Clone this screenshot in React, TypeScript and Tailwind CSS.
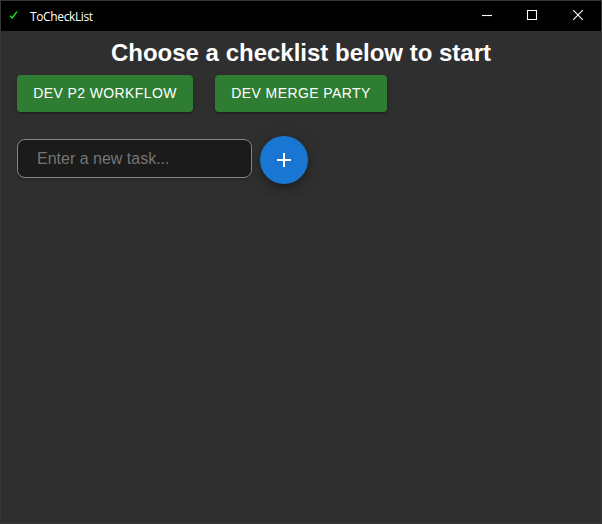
const controls = [
  { name: 'Minimize', d: 'M1 5.5h10' },
  { name: 'Maximize', d: 'M.5.5h9v9h-9z' },
  { name: 'Close', d: 'M.2.2l9.6 9.6M9.8.2L.2 9.8' },
];

const raised =
  'flex h-[37px] items-center justify-center rounded bg-[#2e7d32] pb-px text-sm tracking-[0.4px] shadow-[0_3px_1px_-2px_rgba(0,0,0,0.2),0_2px_2px_0_rgba(0,0,0,0.14),0_1px_5px_0_rgba(0,0,0,0.12)]';

export default function App() {
  return (
    <div className="flex h-[524px] w-[602px] flex-col border border-[#363636] bg-[#2f2f2f] font-['Liberation_Sans',Arial,sans-serif] text-white">
      <header className="flex h-[30px] shrink-0 items-center bg-black pb-0.5">
        <svg className="ml-[7px] h-4 w-4" viewBox="0 0 16 16" fill="none" stroke="#0df50d" strokeWidth="1.4">
          <path d="M2 8.8 4.3 11 8.9 4.7" />
        </svg>
        <span className="ml-1.5 pt-[3px] font-['Open_Sans','Noto_Sans',sans-serif] text-[12px] leading-4 tracking-[-0.37px]">ToCheckList</span>
        <div className="ml-auto flex">
          {controls.map(({ name, d }) => (
            <button key={name} aria-label={name} className="flex h-7 w-[46px] items-center justify-center">
              <svg className="overflow-visible" width="10" height="10" viewBox="0 0 10 10" fill="none" stroke="white" strokeWidth="1.1"><path d={d} /></svg>
            </button>
          ))}
        </div>
      </header>
      <main className="px-4">
        <h1 className="mt-2 text-center text-2xl leading-7 font-bold">Choose a checklist below to start</h1>
        <div className="mt-2 flex gap-[22px]">
          <button className={`${raised} w-44`}>DEV P2 WORKFLOW</button>
          <button className={`${raised} w-[172px]`}>DEV MERGE PARTY</button>
        </div>
        <div className="mt-6 flex items-start gap-2">
          <input className="mt-[3px] h-[39px] w-[235px] rounded-lg border border-[#858585] bg-[#1b1b1b] px-[19px] pt-px text-base shadow-[0_2px_3px_rgba(0,0,0,0.15)] placeholder:text-[#757575]" placeholder="Enter a new task..." />
          <button aria-label="Add task" className="flex size-12 items-center justify-center rounded-full bg-[#1976d2] shadow-[0_3px_5px_-1px_rgba(0,0,0,0.2),0_6px_10px_0_rgba(0,0,0,0.14),0_1px_18px_0_rgba(0,0,0,0.12)]">
            <svg width="24" height="24" viewBox="0 0 24 24" fill="white"><path d="M19 13h-6v6h-2v-6H5v-2h6V5h2v6h6z" /></svg>
          </button>
        </div>
      </main>
    </div>
  );
}
